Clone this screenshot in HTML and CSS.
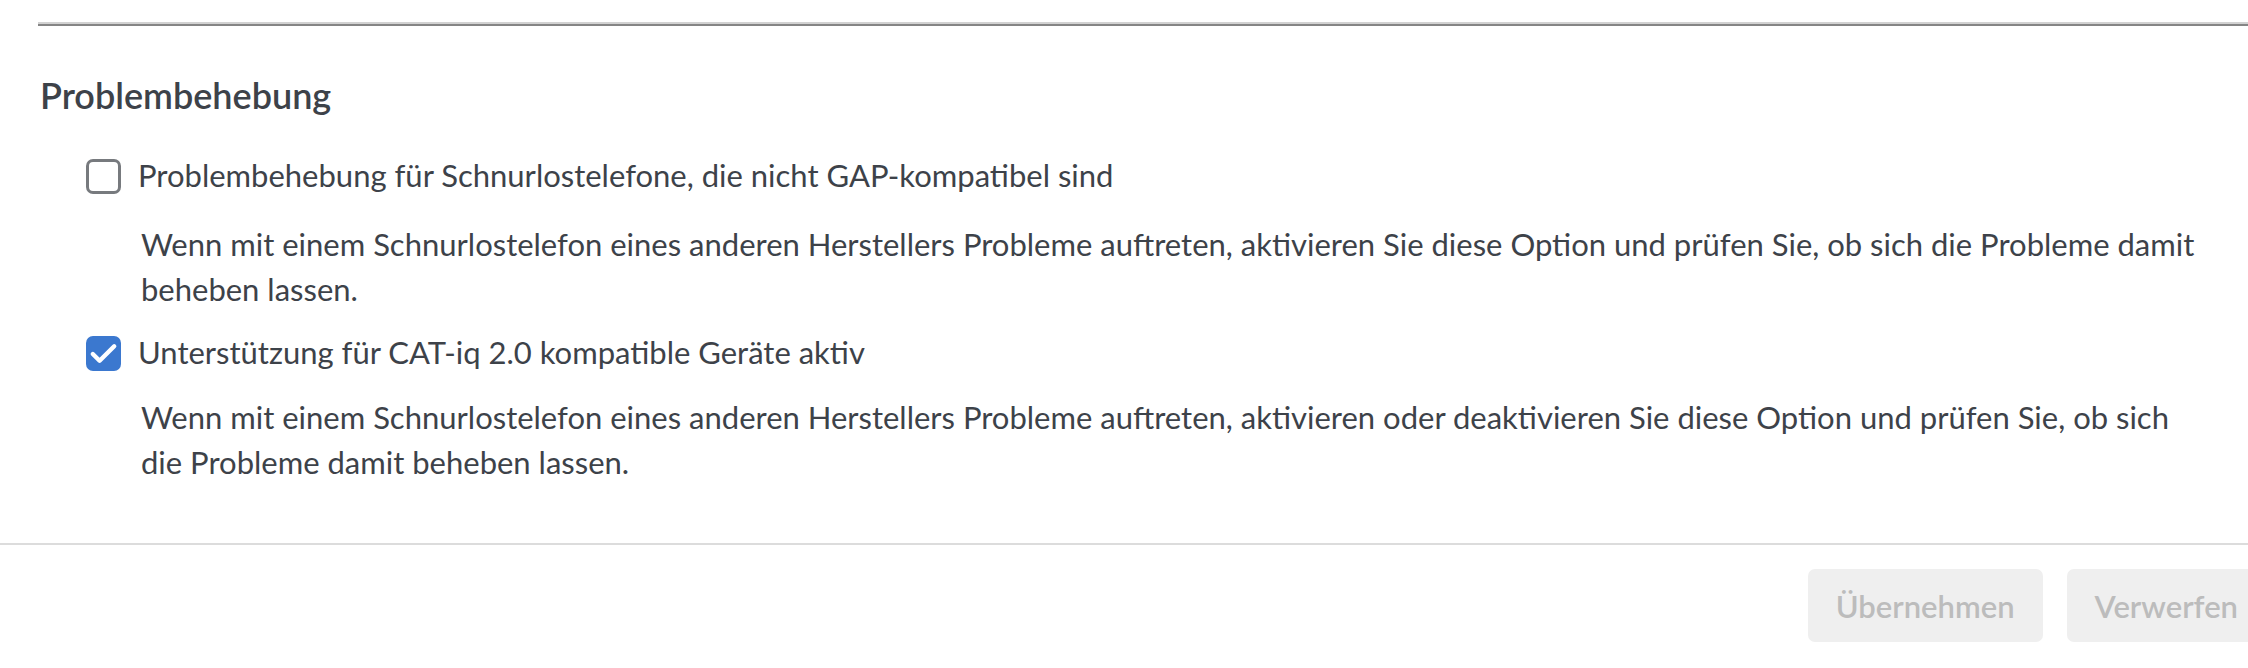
FILE: index.html
```html
<!DOCTYPE html>
<html lang="de">
<head>
  <meta charset="UTF-8" />
  <meta name="viewport" content="width=device-width, initial-scale=1.0"/>
  <title>Problembehebung</title>
  <link rel="stylesheet" href="styles.css">
</head>
<body>

  <div class="page">
    <div class="top-rule"></div>

    <section class="settings">
      <h2>Problembehebung</h2>

      <div class="option">
        <label class="check">
          <span class="box"></span>
          <span>Problembehebung für Schnurlostelefone, die nicht GAP-kompatibel sind</span>
        </label>
        <p class="hint">Wenn mit einem Schnurlostelefon eines anderen Herstellers Probleme auftreten, aktivieren Sie diese Option und prüfen Sie, ob sich die Probleme damit beheben lassen.</p>
      </div>

      <div class="option">
        <label class="check">
          <span class="box checked">
            <svg viewBox="0 0 36 36" width="35" height="35"><path d="M7 18.5 L14 25.5 L29 10.5" fill="none" stroke="#fff" stroke-width="4.5" stroke-linecap="round" stroke-linejoin="round"/></svg>
          </span>
          <span>Unterstützung für CAT-iq 2.0 kompatible Geräte aktiv</span>
        </label>
        <p class="hint">Wenn mit einem Schnurlostelefon eines anderen Herstellers Probleme auftreten, aktivieren oder deaktivieren Sie diese Option und prüfen Sie, ob sich die Probleme damit beheben lassen.</p>
      </div>
    </section>
  </div>

  <div class="footer">
    <button class="btn" disabled>Übernehmen</button>
    <button class="btn" disabled>Verwerfen</button>
  </div>

</body>
</html>
```

FILE: styles.css
```css
:root {
  --text: #3d4249;
  --muted: #bcbcbc;
  --blue: #3b78cf;
  --line: #dcdcdc;
}

body {
  margin: 0;
  font-family: 'Source Sans Pro', Lato, sans-serif;
  font-size: 31px;
  color: var(--text);
  background: #fff;
  overflow: hidden;
}

.page {
  padding: 22px 0 0 38px;
}

.top-rule {
  height: 2px;
  background: #d2d2d2;
  border-bottom: 2px solid #858585;
}

.settings {
  padding-bottom: 58px;
}

h2 {
  margin: 47px 0 0 2px;
  font-size: 36px;
  font-weight: 600;
  line-height: 44px;
}

.option {
  margin-top: 36px;
}

.option + .option {
  margin-top: 18px;
}

.check {
  display: flex;
  align-items: center;
  gap: 17px;
  margin-left: 48px;
  line-height: 45px;
}

.box {
  width: 35px;
  height: 35px;
  box-sizing: border-box;
  border: 3px solid #777a7e;
  border-radius: 7px;
  flex-shrink: 0;
  margin-top: 2px;
}

.box.checked {
  border: none;
  background: var(--blue);
}

.box svg {
  display: block;
}

.hint {
  margin: 24px 44px 0 103px;
  line-height: 45px;
}

.option + .option .hint {
  margin-top: 20px;
}

.footer {
  border-top: 2px solid var(--line);
  padding: 24px 0 25px;
  margin-right: -18px;
  display: flex;
  justify-content: flex-end;
  gap: 24px;
}

.btn {
  font-family: inherit;
  font-size: 31px;
  font-weight: 600;
  color: var(--muted);
  background: #efefef;
  border: none;
  border-radius: 7px;
  height: 73px;
  padding: 0 28px;
}
```
